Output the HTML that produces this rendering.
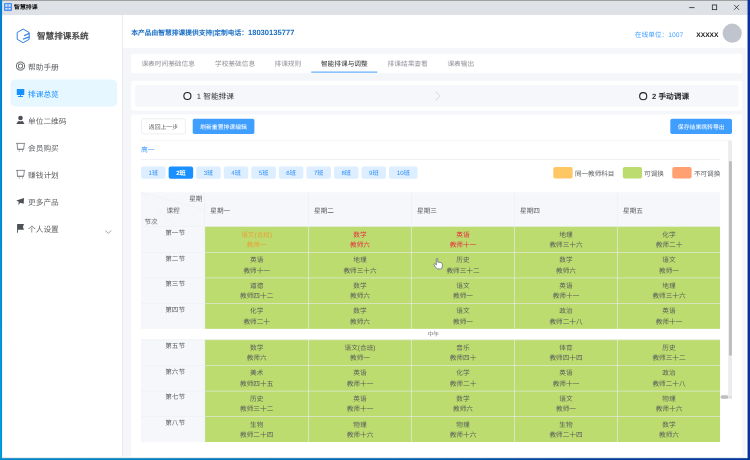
<!DOCTYPE html>
<html lang="zh-CN">
<head>
<meta charset="utf-8">
<title>智慧排课</title>
<style>
*{box-sizing:border-box;margin:0;padding:0}
html,body{width:750px;height:460px;overflow:hidden}
body{font-family:"Liberation Sans",sans-serif;background:#f4f6fa;position:relative;color:#606266;font-size:7.7px;text-rendering:geometricPrecision}
#root{position:absolute;left:0;top:0;width:750px;height:460px;will-change:transform;background:#f4f6fa;overflow:hidden}
.abs{position:absolute}
.t{position:absolute;white-space:nowrap;height:10px;line-height:10px}
#ttl{left:14px;top:2.6px;font-size:5.9px;color:#111;font-weight:bold}
#logo{left:37px;top:31.2px;font-size:8.6px;font-weight:bold;color:#4a4a4a}
.mi{position:absolute;left:28px;height:10px;line-height:10px;font-size:7.7px;color:#606266;white-space:nowrap}
.mi.on{color:#1890ff}
.ic{position:absolute;left:15.7px;width:10px;height:10px}
#hl{left:131.3px;top:28.4px;font-size:6.75px;color:#1b6fc4;font-weight:bold}
#online{left:634.8px;top:30.6px;font-size:6.7px;color:#409eff}
#user{left:696.3px;top:30.7px;font-size:6.65px;color:#222;font-weight:bold}
.tab{position:absolute;top:59.7px;height:10px;line-height:10px;font-size:6.7px;color:#909399;white-space:nowrap}
.tab.on{color:#303133}
.st{position:absolute;top:91.9px;height:10px;line-height:10px;font-size:7.7px;color:#303133;white-space:nowrap}
.btn{position:absolute;top:123.1px;height:10px;line-height:10px;font-size:5.85px;text-align:center;white-space:nowrap}
#b1{left:141.2px;width:44.5px;color:#606266}
#b2{left:192.7px;width:61.7px;color:#fff;font-weight:500}
#b3{left:670.4px;width:61.7px;color:#fff;font-weight:500}
#grade{left:141px;top:146.2px;font-size:6.8px;color:#409eff}
.tag{position:absolute;top:168.6px;height:10px;line-height:10px;color:#2f8ff8;font-weight:500;font-size:6.1px;text-align:center;white-space:nowrap}
.tag.on{color:#fff;font-weight:bold}
.lt{position:absolute;top:169.6px;font-size:6.6px;height:10px;line-height:10px;color:#606266;white-space:nowrap}
.c{position:absolute;height:10px;line-height:10px;font-size:6.65px;white-space:nowrap;text-align:center;color:#5a5f5a}
.c.n{color:#606266}
.c.hd{text-align:left;font-size:6.6px;color:#606266}
.c.noon{font-size:5.8px;color:#707070}
.c.o{color:#e6a23c}
.c.r{color:#e62e3a}
</style>
</head>
<body>
<div id="root">
<svg class="abs" style="left:0;top:0" width="750" height="460" viewBox="0 0 750 460"><defs><linearGradient id="gl" x1="0" y1="0" x2="0" y2="1"><stop offset="0" stop-color="#0082d7"/><stop offset="1" stop-color="#00a0e1"/></linearGradient><linearGradient id="gb" x1="0" y1="0" x2="1" y2="0"><stop offset="0" stop-color="#0087c3"/><stop offset="0.16" stop-color="#0082b9"/><stop offset="0.5" stop-color="#0064af"/><stop offset="0.76" stop-color="#004196"/><stop offset="1" stop-color="#003296"/></linearGradient></defs><rect x="0.00" y="0.00" width="750.00" height="460.00" fill="#f4f6fa"/><rect x="0.00" y="0.00" width="750.00" height="14.90" fill="#dee1e6"/><rect x="0.00" y="14.30" width="750.00" height="0.60" fill="#d8dbe1"/><rect x="0.00" y="0.00" width="750.00" height="0.90" fill="#9a9a9a"/><rect x="2.00" y="14.90" width="120.20" height="443.10" fill="#fff"/><rect x="122.20" y="14.90" width="0.90" height="443.10" fill="#e8eaef"/><rect x="123.10" y="14.90" width="624.50" height="32.90" fill="#fff"/><rect x="131.20" y="53.80" width="611.00" height="19.50" rx="1.2" fill="#fff"/><rect x="311.20" y="71.60" width="66.10" height="1.00" fill="#409eff"/><rect x="131.20" y="80.80" width="611.00" height="29.90" rx="3.0" fill="#fff"/><rect x="135.20" y="85.10" width="603.20" height="21.70" rx="2.0" fill="#f5f7fa"/><rect x="131.20" y="114.40" width="611.00" height="346.60" rx="0.8" fill="#fff"/><rect x="2.00" y="456.60" width="745.60" height="1.40" fill="#fff"/><rect x="2.00" y="457.70" width="745.60" height="0.50" fill="#b4bcc6"/><rect x="745.80" y="40.00" width="1.80" height="418.00" fill="#fff"/><rect x="10.60" y="79.60" width="106.40" height="26.80" rx="4.5" fill="#e6f7ff"/><circle cx="732.2" cy="33.2" r="9.6" fill="#c0c4cc"/><rect x="141.5" y="118.7" width="43.9" height="15.2" rx="2" fill="#fff" stroke="#dfe2e8" stroke-width="0.6"/><rect x="192.70" y="118.70" width="61.70" height="15.40" rx="1.8" fill="#409eff"/><rect x="670.30" y="118.70" width="61.70" height="15.40" rx="1.8" fill="#409eff"/><rect x="141.10" y="166.40" width="24.50" height="12.30" rx="2.0" fill="#dceeff"/><rect x="168.65" y="166.40" width="24.50" height="12.30" rx="2.0" fill="#1890ff"/><rect x="196.20" y="166.40" width="24.50" height="12.30" rx="2.0" fill="#dceeff"/><rect x="223.75" y="166.40" width="24.50" height="12.30" rx="2.0" fill="#dceeff"/><rect x="251.30" y="166.40" width="24.50" height="12.30" rx="2.0" fill="#dceeff"/><rect x="278.85" y="166.40" width="24.50" height="12.30" rx="2.0" fill="#dceeff"/><rect x="306.40" y="166.40" width="24.50" height="12.30" rx="2.0" fill="#dceeff"/><rect x="333.95" y="166.40" width="24.50" height="12.30" rx="2.0" fill="#dceeff"/><rect x="361.50" y="166.40" width="24.50" height="12.30" rx="2.0" fill="#dceeff"/><rect x="389.05" y="166.40" width="28.50" height="12.30" rx="2.0" fill="#dceeff"/><rect x="141.00" y="192.30" width="579.05" height="34.15" fill="#f5f7fa"/><rect x="141.00" y="226.45" width="64.10" height="102.40" fill="#f5f7fa"/><rect x="205.10" y="226.45" width="514.95" height="102.40" fill="#bcdc70"/><rect x="141.00" y="226.45" width="579.05" height="0.55" fill="#ebeef5"/><rect x="141.00" y="252.05" width="579.05" height="0.55" fill="#ebeef5"/><rect x="141.00" y="277.65" width="579.05" height="0.55" fill="#ebeef5"/><rect x="141.00" y="303.25" width="579.05" height="0.55" fill="#ebeef5"/><rect x="204.40" y="226.45" width="0.60" height="102.40" fill="#ebeef5"/><rect x="308.20" y="226.45" width="0.60" height="102.40" fill="#ebeef5"/><rect x="411.20" y="226.45" width="0.60" height="102.40" fill="#ebeef5"/><rect x="514.20" y="226.45" width="0.60" height="102.40" fill="#ebeef5"/><rect x="617.20" y="226.45" width="0.60" height="102.40" fill="#ebeef5"/><rect x="141.00" y="339.60" width="64.10" height="102.40" fill="#f5f7fa"/><rect x="205.10" y="339.60" width="514.95" height="102.40" fill="#bcdc70"/><rect x="141.00" y="339.60" width="579.05" height="0.55" fill="#ebeef5"/><rect x="141.00" y="365.20" width="579.05" height="0.55" fill="#ebeef5"/><rect x="141.00" y="390.80" width="579.05" height="0.55" fill="#ebeef5"/><rect x="141.00" y="416.40" width="579.05" height="0.55" fill="#ebeef5"/><rect x="204.40" y="339.60" width="0.60" height="102.40" fill="#ebeef5"/><rect x="308.20" y="339.60" width="0.60" height="102.40" fill="#ebeef5"/><rect x="411.20" y="339.60" width="0.60" height="102.40" fill="#ebeef5"/><rect x="514.20" y="339.60" width="0.60" height="102.40" fill="#ebeef5"/><rect x="617.20" y="339.60" width="0.60" height="102.40" fill="#ebeef5"/><rect x="204.40" y="192.30" width="0.60" height="34.15" fill="#ebeef5"/><rect x="308.20" y="192.30" width="0.60" height="34.15" fill="#ebeef5"/><rect x="411.20" y="192.30" width="0.60" height="34.15" fill="#ebeef5"/><rect x="514.20" y="192.30" width="0.60" height="34.15" fill="#ebeef5"/><rect x="617.20" y="192.30" width="0.60" height="34.15" fill="#ebeef5"/><path d="M141.00 192.30L205.10 210.30M141.00 192.30L176.00 226.45" stroke="#ebeef5" stroke-width="0.55" fill="none"/><rect x="141.00" y="140.20" width="587.30" height="0.55" fill="#eceef3"/><rect x="141.00" y="159.15" width="579.60" height="0.55" fill="#e4e7ed"/><rect x="728.20" y="140.30" width="3.70" height="254.90" fill="#ececef"/><rect x="729.00" y="161.00" width="2.90" height="194.70" rx="1.2" fill="#bebebe"/><rect x="720.70" y="395.20" width="7.60" height="3.50" rx="1.5" fill="#bebebe"/><rect x="728.30" y="395.20" width="3.70" height="3.50" fill="#e1e1e1"/><rect x="553.30" y="166.90" width="19.30" height="11.50" rx="2.0" fill="#ffc664"/><rect x="622.80" y="166.90" width="19.30" height="11.50" rx="2.0" fill="#bcdc70"/><rect x="672.30" y="166.90" width="19.30" height="11.50" rx="2.0" fill="#ffa073"/><rect x="0.00" y="0.00" width="2.00" height="460.00" fill="url(#gl)"/><rect x="1.50" y="0.90" width="0.60" height="457.30" fill="#0a6aa8" opacity="0.55"/><rect x="747.55" y="0.00" width="2.45" height="460.00" fill="#05329f"/><rect x="0.00" y="458.20" width="750.00" height="1.80" fill="url(#gb)"/><g transform="translate(4,3) scale(0.8889)"><rect x="0" y="0" width="9" height="9" rx="1" fill="#4a8ef0"/><rect x="1.5" y="1.3" width="2.5" height="3" fill="#cfe1fc"/><rect x="5" y="1.3" width="2.5" height="3" fill="#cfe1fc"/><rect x="1.5" y="5.6" width="2.5" height="1.8" fill="#dbe8fd"/><rect x="5" y="5.6" width="2.5" height="1.8" fill="#dbe8fd"/></g>
<path d="M689.2 7.6h5.3" stroke="#222" stroke-width="0.8" fill="none"/><rect x="712.3" y="4.95" width="4.4" height="4.7" stroke="#222" stroke-width="0.75" fill="none"/><path d="M734.1 4.9l4.9 4.9M739 4.9l-4.9 4.9" stroke="#222" stroke-width="0.75" fill="none"/>
<g transform="translate(15.2,27.9)"><path d="M8 1.2L14 4.6V11.4L8 14.8L2 11.4V4.6Z" fill="none" stroke="#2f7fe0" stroke-width="1" stroke-linejoin="round"/><path d="M14 5.5L8.8 7.8M14 9L7.6 11.4" stroke="#2f7fe0" stroke-width="1.2" fill="none"/></g>
<g transform="translate(15.5,61)"><circle cx="5" cy="5.05" r="4.05" fill="none" stroke="#5c5f66" stroke-width="0.95"/><circle cx="5" cy="5.05" r="2.15" fill="none" stroke="#5c5f66" stroke-width="0.9"/><path d="M2.1 2.15L3.5 3.55M7.9 2.15L6.5 3.55M2.1 7.95L3.5 6.55M7.9 7.95L6.5 6.55" stroke="#5c5f66" stroke-width="0.8"/></g>
<g transform="translate(15.7,88.3)"><rect x="1.1" y="0.8" width="7.5" height="5.8" rx="0.4" fill="#1890ff"/><rect x="4.4" y="6.5" width="0.9" height="1.2" fill="#1890ff"/><rect x="2.2" y="7.7" width="5.3" height="1" rx="0.4" fill="#1890ff"/></g>
<g transform="translate(15.7,115.1)"><circle cx="4.8" cy="2.9" r="2.3" fill="#4d5056"/><path d="M0.6 9L2.4 6.2Q3.6 5.6 4.8 6.4Q6 5.6 7.2 6.2L8.8 9Z" fill="#4d5056"/></g>
<g transform="translate(15.7,142.1)"><path d="M0.3 1.3H9.4M1.5 1.3L1.8 7.2M8.7 1.3L7.9 7.2" fill="none" stroke="#7d8087" stroke-width="0.9"/><path d="M1.5 7.2H8.1" stroke="#74777e" stroke-width="1.2" fill="none"/><rect x="3.1" y="8.2" width="0.9" height="1.5" fill="#9a9da3"/><rect x="6.3" y="8.2" width="0.9" height="1.5" fill="#9a9da3"/></g>
<g transform="translate(15.7,169.1)"><path d="M0.3 1.3H9.4M1.5 1.3L1.8 7.2M8.7 1.3L7.9 7.2" fill="none" stroke="#7d8087" stroke-width="0.9"/><path d="M1.5 7.2H8.1" stroke="#74777e" stroke-width="1.2" fill="none"/><rect x="3.1" y="8.2" width="0.9" height="1.5" fill="#9a9da3"/><rect x="6.3" y="8.2" width="0.9" height="1.5" fill="#9a9da3"/></g>
<g transform="translate(15.7,196.3)"><path d="M8.3 1.6L0.6 4.3L3 5.4L2.7 8.8L4.6 6.4L8 7.5Z" fill="#4d5056"/></g>
<g transform="translate(15.7,223.5)"><path d="M1.4 0.6H8.3L7.2 3.4L8.3 6.2H2.3V9.2H1.4Z" fill="#4d5056"/></g>
<g transform="translate(104.3,229.1)"><path d="M1 1.5L4 4.3L7 1.5" fill="none" stroke="#909399" stroke-width="0.8"/></g>
<circle cx="187.4" cy="96.0" r="3.55" fill="none" stroke="#222" stroke-width="1.1"/>
<path d="M435.4 91.4L440.2 96L435.4 100.6" fill="none" stroke="#c0c4cc" stroke-width="0.6"/>
<circle cx="643.2" cy="96.2" r="3.55" fill="none" stroke="#222" stroke-width="1.1"/>
<path d="M436.3 258.7Q437.05 258 437.8 258.7V262.2L439.3 262.3L440.9 262.6Q442.4 263 442.4 264.4V266.6Q442.2 268.6 440.8 268.9H437.6Q436.4 268.6 435.6 267.2L433.9 264.8Q433.6 264 434.4 263.8Q435.2 263.7 436.3 265Z" fill="#fff" stroke="#566076" stroke-width="0.7" stroke-linejoin="round"/>
</svg>
<div id="ttl" class="t">智慧排课</div>

<div id="logo" class="t">智慧排课系统</div>

<div class="mi" style="top:62.6px">帮助手册</div>
<div class="mi on" style="top:89.7px">排课总览</div>
<div class="mi" style="top:116.9px">单位二维码</div>
<div class="mi" style="top:143.9px">会员购买</div>
<div class="mi" style="top:170.9px">赚钱计划</div>
<div class="mi" style="top:198.1px">更多产品</div>
<div class="mi" style="top:225.3px">个人设置</div>

<div id="hl" class="t">本产品由智慧排课提供支持|定制电话：<b style="font-size:7.6px">18030135777</b></div>
<div id="online" class="t">在线单位：1007</div>
<div id="user" class="t">XXXXX</div>

<div class="tab" style="left:141.4px">课表时间基础信息</div>
<div class="tab" style="left:215px">学校基础信息</div>
<div class="tab" style="left:274.5px">排课规则</div>
<div class="tab on" style="left:320.9px">智能排课与调整</div>
<div class="tab" style="left:387.6px">排课结果查看</div>
<div class="tab" style="left:447.4px">课表输出</div>

<div class="st" style="left:196.8px">1 智能排课</div>
<div class="st" style="left:652px;font-weight:bold">2 手动调课</div>

<div id="b1" class="btn">返回上一步</div>
<div id="b2" class="btn">刷新重置排课编辑</div>
<div id="b3" class="btn">保存结果跳转导出</div>
<div id="grade" class="t">高一</div>
<div class="tag" style="left:141.10px;width:24.50px">1班</div><div class="tag on" style="left:168.65px;width:24.50px">2班</div><div class="tag" style="left:196.20px;width:24.50px">3班</div><div class="tag" style="left:223.75px;width:24.50px">4班</div><div class="tag" style="left:251.30px;width:24.50px">5班</div><div class="tag" style="left:278.85px;width:24.50px">6班</div><div class="tag" style="left:306.40px;width:24.50px">7班</div><div class="tag" style="left:333.95px;width:24.50px">8班</div><div class="tag" style="left:361.50px;width:24.50px">9班</div><div class="tag" style="left:389.05px;width:28.50px">10班</div>
<div class="lt" style="left:574.9px">同一教师科目</div>
<div class="lt" style="left:644.1px">可调换</div>
<div class="lt" style="left:693.9px">不可调换</div>
<div class="c n" style="left:145.20px;width:59.90px;top:228.95px">第一节</div><div class="c g o" style="left:205.20px;width:103.00px;top:230.55px">语文(合班)</div><div class="c g o" style="left:205.20px;width:103.00px;top:241.05px">教师一</div><div class="c g r" style="left:308.50px;width:103.00px;top:230.55px">数学</div><div class="c g r" style="left:308.50px;width:103.00px;top:241.05px">教师六</div><div class="c g r" style="left:411.50px;width:103.00px;top:230.55px">英语</div><div class="c g r" style="left:411.50px;width:103.00px;top:241.05px">教师十一</div><div class="c g " style="left:514.50px;width:103.00px;top:230.55px">地理</div><div class="c g " style="left:514.50px;width:103.00px;top:241.05px">教师三十六</div><div class="c g " style="left:617.50px;width:103.00px;top:230.55px">化学</div><div class="c g " style="left:617.50px;width:103.00px;top:241.05px">教师二十</div>
<div class="c n" style="left:145.20px;width:59.90px;top:254.55px">第二节</div><div class="c g " style="left:205.20px;width:103.00px;top:256.15px">英语</div><div class="c g " style="left:205.20px;width:103.00px;top:266.65px">教师十一</div><div class="c g " style="left:308.50px;width:103.00px;top:256.15px">地理</div><div class="c g " style="left:308.50px;width:103.00px;top:266.65px">教师三十六</div><div class="c g " style="left:411.50px;width:103.00px;top:256.15px">历史</div><div class="c g " style="left:411.50px;width:103.00px;top:266.65px">教师三十二</div><div class="c g " style="left:514.50px;width:103.00px;top:256.15px">数学</div><div class="c g " style="left:514.50px;width:103.00px;top:266.65px">教师六</div><div class="c g " style="left:617.50px;width:103.00px;top:256.15px">语文</div><div class="c g " style="left:617.50px;width:103.00px;top:266.65px">教师一</div>
<div class="c n" style="left:145.20px;width:59.90px;top:280.15px">第三节</div><div class="c g " style="left:205.20px;width:103.00px;top:281.75px">道德</div><div class="c g " style="left:205.20px;width:103.00px;top:292.25px">教师四十二</div><div class="c g " style="left:308.50px;width:103.00px;top:281.75px">数学</div><div class="c g " style="left:308.50px;width:103.00px;top:292.25px">教师六</div><div class="c g " style="left:411.50px;width:103.00px;top:281.75px">语文</div><div class="c g " style="left:411.50px;width:103.00px;top:292.25px">教师一</div><div class="c g " style="left:514.50px;width:103.00px;top:281.75px">英语</div><div class="c g " style="left:514.50px;width:103.00px;top:292.25px">教师十一</div><div class="c g " style="left:617.50px;width:103.00px;top:281.75px">地理</div><div class="c g " style="left:617.50px;width:103.00px;top:292.25px">教师三十六</div>
<div class="c n" style="left:145.20px;width:59.90px;top:305.75px">第四节</div><div class="c g " style="left:205.20px;width:103.00px;top:307.35px">化学</div><div class="c g " style="left:205.20px;width:103.00px;top:317.85px">教师二十</div><div class="c g " style="left:308.50px;width:103.00px;top:307.35px">数学</div><div class="c g " style="left:308.50px;width:103.00px;top:317.85px">教师六</div><div class="c g " style="left:411.50px;width:103.00px;top:307.35px">语文</div><div class="c g " style="left:411.50px;width:103.00px;top:317.85px">教师一</div><div class="c g " style="left:514.50px;width:103.00px;top:307.35px">政治</div><div class="c g " style="left:514.50px;width:103.00px;top:317.85px">教师二十八</div><div class="c g " style="left:617.50px;width:103.00px;top:307.35px">英语</div><div class="c g " style="left:617.50px;width:103.00px;top:317.85px">教师十一</div>
<div class="c n" style="left:145.20px;width:59.90px;top:342.10px">第五节</div><div class="c g " style="left:205.20px;width:103.00px;top:343.70px">数学</div><div class="c g " style="left:205.20px;width:103.00px;top:354.20px">教师六</div><div class="c g " style="left:308.50px;width:103.00px;top:343.70px">语文(合班)</div><div class="c g " style="left:308.50px;width:103.00px;top:354.20px">教师一</div><div class="c g " style="left:411.50px;width:103.00px;top:343.70px">音乐</div><div class="c g " style="left:411.50px;width:103.00px;top:354.20px">教师四十</div><div class="c g " style="left:514.50px;width:103.00px;top:343.70px">体育</div><div class="c g " style="left:514.50px;width:103.00px;top:354.20px">教师四十四</div><div class="c g " style="left:617.50px;width:103.00px;top:343.70px">历史</div><div class="c g " style="left:617.50px;width:103.00px;top:354.20px">教师三十二</div>
<div class="c n" style="left:145.20px;width:59.90px;top:367.70px">第六节</div><div class="c g " style="left:205.20px;width:103.00px;top:369.30px">美术</div><div class="c g " style="left:205.20px;width:103.00px;top:379.80px">教师四十五</div><div class="c g " style="left:308.50px;width:103.00px;top:369.30px">英语</div><div class="c g " style="left:308.50px;width:103.00px;top:379.80px">教师十一</div><div class="c g " style="left:411.50px;width:103.00px;top:369.30px">化学</div><div class="c g " style="left:411.50px;width:103.00px;top:379.80px">教师二十</div><div class="c g " style="left:514.50px;width:103.00px;top:369.30px">英语</div><div class="c g " style="left:514.50px;width:103.00px;top:379.80px">教师十一</div><div class="c g " style="left:617.50px;width:103.00px;top:369.30px">政治</div><div class="c g " style="left:617.50px;width:103.00px;top:379.80px">教师二十八</div>
<div class="c n" style="left:145.20px;width:59.90px;top:393.30px">第七节</div><div class="c g " style="left:205.20px;width:103.00px;top:394.90px">历史</div><div class="c g " style="left:205.20px;width:103.00px;top:405.40px">教师三十二</div><div class="c g " style="left:308.50px;width:103.00px;top:394.90px">英语</div><div class="c g " style="left:308.50px;width:103.00px;top:405.40px">教师十一</div><div class="c g " style="left:411.50px;width:103.00px;top:394.90px">数学</div><div class="c g " style="left:411.50px;width:103.00px;top:405.40px">教师六</div><div class="c g " style="left:514.50px;width:103.00px;top:394.90px">语文</div><div class="c g " style="left:514.50px;width:103.00px;top:405.40px">教师一</div><div class="c g " style="left:617.50px;width:103.00px;top:394.90px">物理</div><div class="c g " style="left:617.50px;width:103.00px;top:405.40px">教师十六</div>
<div class="c n" style="left:145.20px;width:59.90px;top:418.90px">第八节</div><div class="c g " style="left:205.20px;width:103.00px;top:420.50px">生物</div><div class="c g " style="left:205.20px;width:103.00px;top:431.00px">教师二十四</div><div class="c g " style="left:308.50px;width:103.00px;top:420.50px">物理</div><div class="c g " style="left:308.50px;width:103.00px;top:431.00px">教师十六</div><div class="c g " style="left:411.50px;width:103.00px;top:420.50px">物理</div><div class="c g " style="left:411.50px;width:103.00px;top:431.00px">教师十六</div><div class="c g " style="left:514.50px;width:103.00px;top:420.50px">生物</div><div class="c g " style="left:514.50px;width:103.00px;top:431.00px">教师二十四</div><div class="c g " style="left:617.50px;width:103.00px;top:420.50px">数学</div><div class="c g " style="left:617.50px;width:103.00px;top:431.00px">教师六</div>
<div class="c noon" style="left:413.20px;width:40px;top:330.40px">中午</div>
<div class="c hd" style="left:210.30px;top:206.90px">星期一</div><div class="c hd" style="left:314.10px;top:206.90px">星期二</div><div class="c hd" style="left:417.10px;top:206.90px">星期三</div><div class="c hd" style="left:520.10px;top:206.90px">星期四</div><div class="c hd" style="left:623.10px;top:206.90px">星期五</div><div class="c hd" style="left:189.2px;top:195.4px">星期</div><div class="c hd" style="left:166.6px;top:206.6px">课程</div><div class="c hd" style="left:144.5px;top:217.5px">节次</div>

</div>
</body>
</html>
